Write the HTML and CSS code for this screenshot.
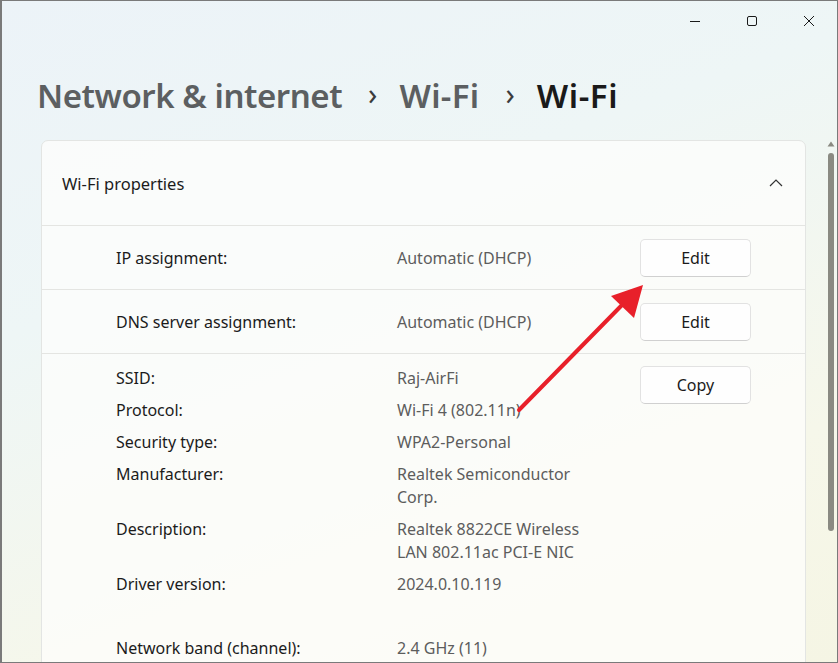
FILE: index.html
```html
<!DOCTYPE html>
<html lang="en">
<head>
    <meta charset="UTF-8">
    <title>Wi-Fi properties</title>
    <link rel="stylesheet" href="styles.css">
</head>
<body>
    <div class="window">
        <!-- Title bar controls -->
        <div class="titlebar">
            <span class="ctrl">
                <svg width="12" height="12" viewBox="0 0 12 12"><path d="M1 6.5h10" stroke="#1a1a1a" stroke-width="1"/></svg>
            </span>
            <span class="ctrl">
                <svg width="12" height="12" viewBox="0 0 12 12"><rect x="1.5" y="1.5" width="9" height="9" rx="1.5" fill="none" stroke="#1a1a1a" stroke-width="1"/></svg>
            </span>
            <span class="ctrl">
                <svg width="12" height="12" viewBox="0 0 12 12"><path d="M1 1l10 10M11 1L1 11" stroke="#1a1a1a" stroke-width="1"/></svg>
            </span>
        </div>

        <div class="main">
            <div class="content">
                <h1 class="breadcrumb">
                    <span class="crumb">Network &amp; internet</span>
                    <span class="sep">&#x203A;</span>
                    <span class="crumb">Wi-Fi</span>
                    <span class="sep">&#x203A;</span>
                    <span class="crumb current">Wi-Fi</span>
                </h1>

                <div class="card">
                    <div class="card-header">
                        <span>Wi-Fi properties</span>
                        <svg class="chevron" width="14" height="8" viewBox="0 0 14 8"><path d="M1 7l6-6 6 6" fill="none" stroke="#333" stroke-width="1.2"/></svg>
                    </div>

                    <div class="row">
                        <span class="label">IP assignment:</span>
                        <span class="value">Automatic (DHCP)</span>
                        <button class="btn">Edit</button>
                    </div>

                    <div class="row">
                        <span class="label">DNS server assignment:</span>
                        <span class="value">Automatic (DHCP)</span>
                        <button class="btn">Edit</button>
                    </div>

                    <div class="details">
                        <div class="props">
                            <span class="label">SSID:</span>
                            <span class="value">Raj-AirFi</span>
                            <span class="label">Protocol:</span>
                            <span class="value">Wi-Fi 4 (802.11n)</span>
                            <span class="label">Security type:</span>
                            <span class="value">WPA2-Personal</span>
                            <span class="label">Manufacturer:</span>
                            <span class="value">Realtek Semiconductor Corp.</span>
                            <span class="label">Description:</span>
                            <span class="value">Realtek 8822CE Wireless LAN 802.11ac PCI-E NIC</span>
                            <span class="label">Driver version:</span>
                            <span class="value">2024.0.10.119</span>
                            <span class="label">&nbsp;</span>
                            <span class="value">&nbsp;</span>
                            <span class="label">Network band (channel):</span>
                            <span class="value">2.4 GHz (11)</span>
                        </div>
                        <button class="btn">Copy</button>
                    </div>
                </div>
            </div>

            <div class="scrollbar">
                <svg width="8" height="6" viewBox="0 0 8 6"><path d="M4 0.5L7.5 5.5H0.5z" fill="#8a8a82"/></svg>
                <div class="thumb"></div>
            </div>
        </div>

        <!-- annotation arrow -->
        <svg class="arrow" width="838" height="663" viewBox="0 0 838 663">
            <line x1="519" y1="410" x2="622" y2="305" stroke="#e8202a" stroke-width="4" stroke-linecap="round"/>
            <path d="M643 285L634 318L611 296z" fill="#e8202a"/>
        </svg>
    </div>
</body>
</html>
```

FILE: styles.css
```css
body {
    margin: 0;
    font-family: 'Noto Sans', sans-serif;
    color: #1b1b1b;
}
.window {
    position: relative;
    width: 838px;
    height: 663px;
    box-sizing: border-box;
    border: 1px solid #7a7a7a;
    border-left-width: 2px;
    overflow: hidden;
    background: linear-gradient(160deg, #ecf3f8 0%, #eef6f6 35%, #f6f7ea 75%, #f5f5e4 100%);
}
.titlebar {
    display: flex;
    justify-content: flex-end;
    height: 40px;
}
.ctrl {
    width: 57px;
    height: 40px;
    display: flex;
    align-items: center;
    justify-content: center;
}
.main {
    display: flex;
}
.content {
    width: 765px;
    padding-left: 39px;
}
.breadcrumb {
    margin: 0 0 0 -4px;
    height: 99px;
    display: flex;
    align-items: center;
    font-size: 33px;
    font-weight: 600;
    color: #5c5f61;
    box-sizing: border-box;
    padding-top: 10px;
}
.sep {
    font-size: 30px;
    font-weight: 400;
    margin: 0 22px 4px 26px;
    color: #3c3c3c;
}
.crumb {
    letter-spacing: 0.3px;
}
.crumb:first-child {
    letter-spacing: -0.45px;
}
.current {
    color: #1a1a1a;
    letter-spacing: 0.6px;
}
.card {
    background: rgba(253, 253, 252, 0.75);
    border: 1px solid #e3e5e3;
    border-radius: 7px;
}
.card-header {
    height: 84px;
    display: flex;
    align-items: center;
    justify-content: space-between;
    padding: 0 22px 0 20px;
    font-size: 16.5px;
    border-bottom: 1px solid #e4e5e2;
}
.row {
    display: grid;
    grid-template-columns: 281px 243px 111px;
    align-items: center;
    height: 63px;
    padding-left: 74px;
    border-bottom: 1px solid #e4e5e2;
    font-size: 16px;
}
.label {
    color: #1b1b1b;
}
.value {
    color: #5d5d5d;
}
.btn {
    width: 111px;
    height: 38px;
    font-family: 'Noto Sans', sans-serif;
    font-size: 16px;
    color: #1b1b1b;
    background: #fefefe;
    border: 1px solid #e2e2e2;
    border-bottom-color: #d0d0d0;
    border-radius: 5px;
}
.details {
    display: flex;
    align-items: flex-start;
    padding: 12px 0 20px 74px;
    font-size: 16px;
}
.props {
    display: grid;
    grid-template-columns: 281px 205px;
    row-gap: 9px;
    line-height: 23px;
    margin-top: 1px;
    width: 524px;
}
.scrollbar {
    width: 31px;
    display: flex;
    flex-direction: column;
    align-items: flex-end;
    padding-top: 100px;
    padding-right: 3px;
    box-sizing: border-box;
}
.scrollbar svg {
    margin-right: -1px;
}
.thumb {
    margin-top: 6px;
    width: 6px;
    height: 378px;
    border-radius: 3px;
    background: #8a8a82;
}
.arrow {
    position: absolute;
    left: -2px;
    top: -1px;
}
```
